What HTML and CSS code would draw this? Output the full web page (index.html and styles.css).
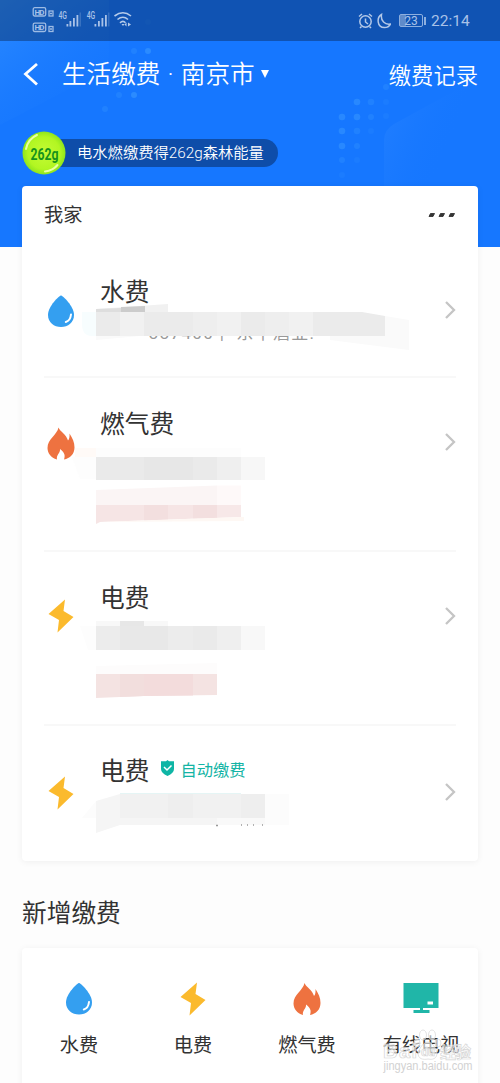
FILE: index.html
```html
<!DOCTYPE html>
<html lang="zh-CN">
<head>
<meta charset="utf-8">
<title>生活缴费</title>
<link rel="stylesheet" href="styles.css">
</head>
<body>
<svg class="defs" width="0" height="0">
  <defs>
    <symbol id="drop" viewBox="0 0 28 33"><path d="M14 .5C15.500 .5 27 11 27 20C27 27.500 21 32 14 32S1 27.500 1 20C1 11 12.500 .5 14 .5Z" fill="#349ff0"/><path d="M24 19.500C23.500 23.800 22 26.200 18.800 27" fill="none" stroke="#fff" stroke-width="2" stroke-linecap="round"/></symbol>
    <symbol id="flame" viewBox="0 0 28 33"><path d="M11.500 .5C13 4.500 19.500 7.500 21 13.500C22.500 12 22.700 9 22.500 6.500C25.500 11 27.500 15.500 27.500 20.500C27.500 27 23 31.500 17 32.500C18.500 28 17.500 25.500 13 22C13.500 26 9 28 10 32.500C4 31 .5 26 .5 21C.5 12 10 8 11.500 .5Z" fill="#ee7240"/></symbol>
    <symbol id="bolt" viewBox="0 0 28 34"><path d="M18 .5L16.500 12L26.500 18L10.500 33.500L12 21L1.500 15Z" fill="#fbba2d"/></symbol>
  </defs>
</svg>
<header class="hero">
  <svg class="hero-art" viewBox="0 0 500 247">
    <defs>
      <linearGradient id="gl" x1="0" y1="0" x2=".7" y2="1"><stop offset="0" stop-color="#43a0ff" stop-opacity=".5"/><stop offset="1" stop-color="#1677ff" stop-opacity="0"/></linearGradient>
      <linearGradient id="gr" x1="0" y1="0" x2=".6" y2=".4"><stop offset="0" stop-color="#3e92ff" stop-opacity=".4"/><stop offset="1" stop-color="#1677ff" stop-opacity="0"/></linearGradient>
    </defs>
    <path d="M0 0H109V55Q108 68 96 75L0 125Z" fill="url(#gl)"/>
    <path d="M384 247V140Q384 130 394 124L500 66V247Z" fill="url(#gr)"/>
    <g fill="#3494ff">
      <g opacity=".7"><circle cx="148" cy="51" r="3"/><circle cx="134" cy="95" r="3"/></g>
      <g opacity=".35"><circle cx="134" cy="51" r="3"/><circle cx="119" cy="95" r="3"/><circle cx="105" cy="109" r="3"/></g>
      <g opacity=".6"><circle cx="357" cy="102" r="3.300"/><circle cx="342" cy="117" r="3.300"/><circle cx="357" cy="117" r="3.300"/><circle cx="342" cy="131" r="3.300"/><circle cx="342" cy="146" r="3.300"/></g>
      <g opacity=".35"><circle cx="371" cy="102" r="3.300"/><circle cx="357" cy="131" r="3.300"/><circle cx="357" cy="146" r="3"/><circle cx="342" cy="160" r="3"/><circle cx="386" cy="87" r="3"/><circle cx="371" cy="117" r="3"/></g>
      <g opacity=".18"><circle cx="148" cy="22" r="3"/><circle cx="386" cy="102" r="3"/><circle cx="386" cy="116" r="3"/><circle cx="371" cy="131" r="3"/><circle cx="357" cy="160" r="3"/><circle cx="342" cy="175" r="3"/></g>
    </g>
  </svg>
  <div class="status">
    <svg class="signals" width="100" height="28" viewBox="0 0 100 28">
      <g fill="none" stroke="#9dbbe4" stroke-width="1.300"><rect x="1.200" y="1.700" width="12.500" height="8.300" rx="1.500"/><rect x="1.200" y="17.200" width="12.500" height="8.300" rx="1.500"/><rect x="17" y="5" width="4" height="5"/><rect x="17" y="20.500" width="4" height="5"/><path d="M18 7.500h2M18 23h2"/></g>
      <g class="sig-text"><text x="2.500" y="8.700" textLength="10">HD</text><text x="2.500" y="24.200" textLength="10">HD</text><text class="net" x="26.500" y="13" textLength="8.500" lengthAdjust="spacingAndGlyphs">4G</text><text class="net" x="54.700" y="13" textLength="8.500" lengthAdjust="spacingAndGlyphs">4G</text></g>
      <g fill="#a9c2e8"><path d="M34.500 18h1.800v2.500h-1.800zM37.500 15h1.800v5.500h-1.800zM41 12h1.800v8.500H41zM44.500 9h1.800v11.500h-1.800z"/><path d="M62.500 18h1.800v2.500h-1.800zM66 15h1.800v5.500H66zM69.500 12h1.800v8.500h-1.800zM73 9h1.800v11.500H73z"/><path opacity=".25" d="M47.500 6.500H49v14h-1.500zM76 6.500h1.500v14H76z"/></g>
      <g fill="none" stroke="#b5cbea" stroke-width="1.600"><path d="M82.500 10Q91 3.500 99 10M85.500 13.500Q91 9 96 13.500M88 16.800Q91 14 93.500 16.800"/></g>
      <path d="M89.500 18l1.500 2 1.500-2zM92.500 18.500l2-2v4zM96 16.500l3 2-3 2z" fill="#b5cbea"/>
    </svg>
    <div class="status-right">
      <svg width="33" height="16" viewBox="0 0 33 16" fill="none" stroke="#b3c8e8" stroke-width="1.500"><circle cx="7.500" cy="8.500" r="5.700"/><path d="M7.500 5.500V9L10 11M1 3.500L4 1M14 3.500L11 1M3.500 13.500L2 15M11.500 13.500L13 15"/><path d="M23.500 1.500C18.500 4.500 18.800 14.500 26.500 14.500C29.500 14.500 31.500 13 32.500 11C27 12 22.500 8 23.500 1.500Z"/></svg>
      <span class="battery"><span class="battery-box">23</span></span>
      <span class="clock">22:14</span>
    </div>
  </div>
  <nav class="nav">
    <svg width="16" height="24" viewBox="0 0 16 24"><path d="M14 2L2.500 12L14 22.500" fill="none" stroke="#fff" stroke-width="2.800"/></svg>
    <h1 class="title">生活缴费 · 南京市</h1>
    <svg class="caret" width="8" height="8" viewBox="0 0 8 8"><path d="M0 0H8L4 8Z" fill="#fff"/></svg>
    <a class="records">缴费记录</a>
  </nav>
  <div class="energy">
    <svg class="ball" width="44" height="44" viewBox="0 0 44 44">
      <defs><radialGradient id="gb"><stop offset="0" stop-color="#c4fb35"/><stop offset=".75" stop-color="#b2f622"/><stop offset="1" stop-color="#8fe51c"/></radialGradient></defs>
      <circle cx="22" cy="22" r="21.500" fill="url(#gb)"/>
      <path d="M4 18Q6 8 15 4M23 40.500Q31 39.500 35.500 34" fill="none" stroke="#eaffa5" stroke-width="2" stroke-linecap="round"/>
      <text class="ball-text" x="8.500" y="28.500" textLength="28" lengthAdjust="spacingAndGlyphs">262g</text>
    </svg>
    <span class="pill">电水燃缴费得262g森林能量</span>
  </div>
</header>
<main>
  <section class="card bills">
    <div class="card-head"><h2 class="home">我家</h2><svg width="28" height="6" viewBox="0 0 28 6"><path d="M2.500 1.500H6.500L5 4.500H1ZM12.500 1.500H16.500L15 4.500H11ZM22.500 1.500H26.500L25 4.500H21Z" fill="#333" stroke="#333" stroke-width=".9"/></svg></div>
    <article class="row first">
      <svg class="icon" width="28" height="33"><use href="#drop"/></svg>
      <h3 class="name">水费</h3>
      <svg class="chev" width="12" height="20" viewBox="0 0 12 20"><path d="M2 2L10 10L2 18"/></svg>
      <svg class="mask" viewBox="44 243 412 134">
        <text class="account" x="143" y="340" textLength="171">·337400 |  东平酒业.</text>
        <path d="M96 313H82V325Q82 337 92 337H96Z" fill="#f7fdfe"/>
        <path d="M96 310L168 305V313H96Z" fill="#f1f1f1"/><path d="M96 310L121 309V313H96Z" fill="#dedede"/><path d="M121 308L145 307V313H121Z" fill="#ccc"/>
        <path d="M96 337H140L96 341ZM330 337H385V317L409 321V351L385 348L330 341Z" fill="#fafafa"/>
        <path d="M96 313H362L385 317V337H96Z" fill="#ebebeb"/><path d="M120 313H144V337H120ZM217 313H241V337H217ZM289 313H313V337H289Z" fill="#f1f1f1"/><path d="M193 313H217V337H193ZM265 313H289V337H265Z" fill="#eee"/>
      </svg>
    </article>
    <article class="row gas">
      <svg class="icon" width="28" height="33"><use href="#flame"/></svg>
      <h3 class="name">燃气费</h3>
      <svg class="chev" width="12" height="20" viewBox="0 0 12 20"><path d="M2 2L10 10L2 18"/></svg>
      <svg class="mask" viewBox="44 376 412 174">
        <path d="M75 457V448H96V457Z" fill="#fffaf7"/><path d="M96 448H241V457H96ZM72 457H96V479H80Z" fill="#fdfdfd"/>
        <path d="M96 457H241V480H96Z" fill="#eaeaea"/><path d="M144 457H193V480H144Z" fill="#e7e7e7"/><path d="M217 457H241V480H217Z" fill="#efefef"/><path d="M241 457H265V480H241Z" fill="#f7f7f7"/>
        <path d="M96 490L217 485.500V505H96Z" fill="#fbf5f5"/><path d="M217 485.500H241V505H217Z" fill="#fef9f9"/>
        <path d="M96 505H241V517L100 522L96 524Z" fill="#f6e5e5"/><path d="M144 505H168V519.500L144 520.500ZM193 505H217V518L193 518.500Z" fill="#f3dfdf"/><path d="M217 505H241V517H217Z" fill="#f7e8e8"/><path d="M100 522L241 517H244V521Z" fill="#fef8f4"/>
      </svg>
    </article>
    <article class="row power">
      <svg class="icon" width="28" height="34"><use href="#bolt"/></svg>
      <h3 class="name">电费</h3>
      <svg class="chev" width="12" height="20" viewBox="0 0 12 20"><path d="M2 2L10 10L2 18"/></svg>
      <svg class="mask" viewBox="44 550 412 174">
        <path d="M96 621H168V626H96Z" fill="#f8f8f8"/><path d="M80 626H96V650H88Z" fill="#fdfdfd"/><path d="M120 621H144V626H120Z" fill="#e7e7e7"/><path d="M96 626H241V650H96Z" fill="#ececec"/><path d="M120 626H168V650H120Z" fill="#e8e8e8"/><path d="M193 626H217V650H193Z" fill="#eaeaea"/><path d="M217 626H241V650H217Z" fill="#efefef"/><path d="M241 626H265V650H241Z" fill="#f8f8f8"/>
        <path d="M96 666L217 663V674H96Z" fill="#fdfcfc"/><path d="M96 674H217V695L144 696L96 698Z" fill="#f4e3e2"/><path d="M144 674H193V695.500L144 696Z" fill="#f3dcdc"/><path d="M120 674H144V696L120 697Z" fill="#f2dedd"/>
      </svg>
    </article>
    <article class="row auto">
      <svg class="icon" width="28" height="34"><use href="#bolt"/></svg>
      <h3 class="name">电费</h3>
      <span class="tag"><svg width="13" height="16" viewBox="0 0 13 16"><path d="M6.500 0L8 1.300H13V9Q13 13 6.500 16Q0 13 0 9V1.300H5Z" fill="#0fb5a5"/><path d="M3 7L6 10L10.500 5.500" fill="none" stroke="#fff" stroke-width="1.500"/></svg>自动缴费</span>
      <svg class="chev" width="12" height="20" viewBox="0 0 12 20"><path d="M2 2L10 10L2 18"/></svg>
      <svg class="mask" viewBox="44 725 412 136">
        <path d="M82 818L96 801V818ZM265 794H289V825H265Z" fill="#fcfcfc"/>
        <path d="M96 801L120 794H217V825H120L96 833Z" fill="#f5f5f5"/><path d="M217 794H265V825H217Z" fill="#f9f9f9"/><path d="M120 794H265V818H120Z" fill="#f1f1f1"/><path d="M168 794H193V818H168ZM241 794H265V818H241Z" fill="#eee"/><path d="M120 793.500H241" stroke="#e5f5f5"/><path d="M216 825.500h2M241 825h1M247 825h1M253 825h1M262 825h1" stroke="#999" stroke-width="1.500"/>
      </svg>
    </article>
  </section>
  <h2 class="add-title">新增缴费</h2>
  <section class="card add">
    <div class="item"><svg width="28" height="33"><use href="#drop"/></svg><span>水费</span></div>
    <div class="item"><svg width="28" height="34"><use href="#bolt"/></svg><span>电费</span></div>
    <div class="item"><svg width="28" height="33"><use href="#flame"/></svg><span>燃气费</span></div>
    <div class="item"><svg width="36" height="33" viewBox="0 0 36 33"><path d="M.5 .5H35.500V25.500H20V27.500H26.500V30.500H10.500V27.500H17V25.500H.5Z" fill="#20b6a8"/><path d="M24.500 19H30V22H24.500Z" fill="#fff"/></svg><span>有线电视</span></div>
  </section>
</main>
<svg class="watermark" width="98" height="50" viewBox="0 0 98 50">
  <g class="wm-paw"><ellipse cx="42" cy="8" rx="3.500" ry="5"/><ellipse cx="51" cy="8" rx="3.500" ry="5"/><ellipse cx="36" cy="16" rx="3" ry="4"/><ellipse cx="57" cy="16" rx="3" ry="4"/><path d="M47 15C51 15 55 21 56 26C56 32 51 33 47 32C42 33 37 32 37 26C39 20 43 15 47 15Z"/></g>
  <text class="wm-brand" x="2" y="31" textLength="34">Bai</text><text class="wm-du" x="40" y="29" textLength="14">du</text><text class="wm-cn" x="59" y="31" textLength="31">经验</text>
  <text class="wm-url" x="2.500" y="43" textLength="89" lengthAdjust="spacingAndGlyphs">jingyan.baidu.com</text>
</svg>
</body>
</html>
```
FILE: styles.css
```css
* { box-sizing: border-box; }
html, body { height: 1083px; overflow: hidden; }
body { margin: 0; background: #fdfdfd; color: #333; font-family: "Noto Sans CJK SC", sans-serif; position: relative; }
h1, h2, h3 { margin: 0; font-weight: 400; }
svg { display: block; flex: none; }
.defs { position: absolute; }
.hero { position: relative; height: 247px; background: #1677ff; color: #fff; }
.hero-art { position: absolute; inset: 0; width: 500px; height: 247px; }
.status { position: relative; height: 41px; padding: 0 30px 0 32px; display: flex; align-items: center; justify-content: space-between; background: rgba(8, 30, 64, .4); }
.signals { margin-top: -1px; }
.sig-text { font-family: Roboto, sans-serif; font-size: 8px; font-weight: 700; fill: #a9c2e8; }
.net { font-size: 10px; font-weight: 500; }
.status-right { display: flex; align-items: center; color: #a9c2e8; font-family: Roboto, sans-serif; }
.battery { display: flex; align-items: center; margin-left: 8px; }
.battery-box { width: 24px; height: 13px; border: 1px solid #8dafdf; border-radius: 2px; font-size: 12px; line-height: 12px; text-align: center; background: linear-gradient(90deg, #5f8bca 28%, transparent 28%); }
.battery::after { content: ""; width: 2px; height: 8px; margin-left: 1px; background: #8dafdf; }
.clock { width: 39px; margin-left: 5px; font-size: 15.500px; line-height: 20px; white-space: nowrap; }
.nav { position: relative; height: 66px; padding: 0 22px 0 23px; display: flex; align-items: center; }
.title { width: 193px; margin: 2px 0 0 23px; font-family: Roboto, "Noto Sans CJK SC", sans-serif; font-size: 24.600px; line-height: 36px; font-weight: 350; word-spacing: 1.200px; white-space: nowrap; }
.caret { margin-left: 6px; }
.records { margin-left: auto; font-size: 22.300px; line-height: 34px; font-weight: 350; }
.energy { position: relative; display: flex; align-items: center; height: 44px; padding-left: 22px; margin-top: 24px; }
.ball { position: relative; z-index: 1; }
.ball-text { font: 700 17px Roboto, sans-serif; fill: #16931c; }
.pill { height: 28px; width: 222px; margin-left: -10px; padding-left: 21px; border-radius: 0 14px 14px 0; background: #0e4da9; font-family: Roboto, "Noto Sans CJK SC", sans-serif; font-size: 15.300px; line-height: 29px; font-weight: 350; white-space: nowrap; }
.card { position: relative; width: 456px; margin: 0 auto; padding: 0 22px; background: #fff; border-radius: 4px; box-shadow: 0 1px 7px rgba(0, 0, 0, .06); }
.bills { height: 675px; margin-top: -61px; }
.card-head { display: flex; height: 57px; align-items: center; justify-content: space-between; }
.home { margin: -2px 0 0; font-size: 19.200px; line-height: 28px; }
.row { position: relative; display: flex; align-items: flex-start; height: 174px; border-top: 2px solid #f8f8f8; }
.row.first { height: 133px; border-top: 0; }
.row.auto { height: 137px; }
.icon { margin: 49px 0 0 3px; }
.first .icon { margin-top: 52px; }
.auto .icon { margin-top: 50px; }
.power .icon { margin-top: 47px; }
.name { margin: 26px 0 0 25px; font-size: 24.700px; line-height: 36px; }
.first .name { margin-top: 29px; }
.auto .name { margin-top: 25px; }
.chev { margin: 54px 0 0 auto; fill: none; stroke: #c5c5c5; stroke-width: 2.300; }
.first .chev { margin-top: 57px; }
.auto .chev { margin-top: 56px; }
.mask { position: absolute; left: 0; bottom: 0; width: 412px; }
.account { font: 17px Roboto, "Noto Sans CJK SC", sans-serif; fill: #999; white-space: pre; }
.tag { display: flex; align-items: center; gap: 6px; margin: 30px 0 0 12px; color: #14b4a5; font-size: 16.300px; line-height: 26px; }
.tag svg { margin-top: -3px; }
.add-title { margin: 32px 22px 0; font-size: 24.700px; line-height: 36px; }
.add { height: 150px; margin-top: 19px; padding: 34px 0 0; display: grid; grid-template-columns: repeat(4, 1fr); }
.item { display: flex; flex-direction: column; align-items: center; font-size: 19.200px; line-height: 28px; }
.item svg { height: 34px; }
.item span { margin-top: 14px; }
.watermark { position: absolute; left: 381px; top: 1027px; }
.watermark text, .wm-paw { fill: rgba(255, 255, 255, .6); stroke: #d6d6d6; stroke-width: .7; }
.wm-brand { font: 700 20px "Liberation Sans", sans-serif; }
.wm-du { font: 700 12px "Liberation Sans", sans-serif; }
.wm-cn { font: 700 16px "Noto Sans CJK SC", sans-serif; }
.watermark .wm-url { font: 12px "Liberation Sans", sans-serif; fill: #d2d2d2; stroke: none; }
```
